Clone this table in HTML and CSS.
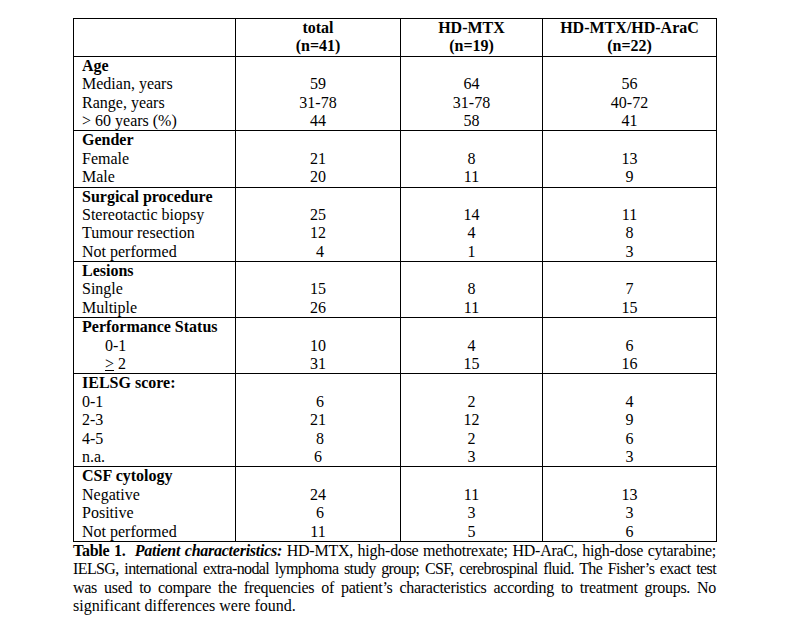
FILE: index.html
```html
<!DOCTYPE html>
<html lang="en">
<head>
<meta charset="utf-8">
<title>Table 1. Patient characteristics</title>
<link rel="stylesheet" href="styles.css">
</head>
<body>
<div class="page">
  <table class="ptable">
    <colgroup>
      <col class="c1"><col class="c2"><col class="c3"><col class="c4">
    </colgroup>
    <thead>
      <tr>
        <th></th>
        <th><div class="ln">total</div><div class="ln">(n=41)</div></th>
        <th><div class="ln">HD-MTX</div><div class="ln">(n=19)</div></th>
        <th><div class="ln">HD-MTX/HD-AraC</div><div class="ln">(n=22)</div></th>
      </tr>
    </thead>
    <tbody>
      <tr>
        <td class="lab"><div class="ln b">Age</div><div class="ln">Median, years</div><div class="ln">Range, years</div><div class="ln">&gt; 60 years (%)</div></td>
        <td><div class="ln"></div><div class="ln">59</div><div class="ln">31-78</div><div class="ln">44</div></td>
        <td><div class="ln"></div><div class="ln">64</div><div class="ln">31-78</div><div class="ln">58</div></td>
        <td><div class="ln"></div><div class="ln">56</div><div class="ln">40-72</div><div class="ln">41</div></td>
      </tr>
      <tr>
        <td class="lab"><div class="ln b">Gender</div><div class="ln">Female</div><div class="ln">Male</div></td>
        <td><div class="ln"></div><div class="ln">21</div><div class="ln">20</div></td>
        <td><div class="ln"></div><div class="ln">8</div><div class="ln">11</div></td>
        <td><div class="ln"></div><div class="ln">13</div><div class="ln">9</div></td>
      </tr>
      <tr>
        <td class="lab"><div class="ln b">Surgical procedure</div><div class="ln">Stereotactic biopsy</div><div class="ln">Tumour resection</div><div class="ln">Not performed</div></td>
        <td><div class="ln"></div><div class="ln">25</div><div class="ln">12</div><div class="ln">&nbsp;4</div></td>
        <td><div class="ln"></div><div class="ln">14</div><div class="ln">4</div><div class="ln">1</div></td>
        <td><div class="ln"></div><div class="ln">11</div><div class="ln">8</div><div class="ln">3</div></td>
      </tr>
      <tr>
        <td class="lab"><div class="ln b">Lesions</div><div class="ln">Single</div><div class="ln">Multiple</div></td>
        <td><div class="ln"></div><div class="ln">15</div><div class="ln">26</div></td>
        <td><div class="ln"></div><div class="ln">8</div><div class="ln">11</div></td>
        <td><div class="ln"></div><div class="ln">7</div><div class="ln">15</div></td>
      </tr>
      <tr>
        <td class="lab"><div class="ln b">Performance Status</div><div class="ln ind">0-1</div><div class="ln ind"><span class="u">&gt;</span> 2</div></td>
        <td><div class="ln"></div><div class="ln">10</div><div class="ln">31</div></td>
        <td><div class="ln"></div><div class="ln">4</div><div class="ln">15</div></td>
        <td><div class="ln"></div><div class="ln">6</div><div class="ln">16</div></td>
      </tr>
      <tr>
        <td class="lab"><div class="ln b">IELSG score:</div><div class="ln">0-1</div><div class="ln">2-3</div><div class="ln">4-5</div><div class="ln">n.a.</div></td>
        <td><div class="ln"></div><div class="ln">&nbsp;6</div><div class="ln">21</div><div class="ln">&nbsp;8</div><div class="ln">6</div></td>
        <td><div class="ln"></div><div class="ln">2</div><div class="ln">12</div><div class="ln">2</div><div class="ln">3</div></td>
        <td><div class="ln"></div><div class="ln">4</div><div class="ln">9</div><div class="ln">6</div><div class="ln">3</div></td>
      </tr>
      <tr>
        <td class="lab"><div class="ln b">CSF cytology</div><div class="ln">Negative</div><div class="ln">Positive</div><div class="ln">Not performed</div></td>
        <td><div class="ln"></div><div class="ln">24</div><div class="ln">&nbsp;6</div><div class="ln">11</div></td>
        <td><div class="ln"></div><div class="ln">11</div><div class="ln">3</div><div class="ln">5</div></td>
        <td><div class="ln"></div><div class="ln">13</div><div class="ln">3</div><div class="ln">6</div></td>
      </tr>
    </tbody>
  </table>
  <div class="caption">
    <div class="cl l1"><b>Table 1.</b>&nbsp; <b><i>Patient characteristics:</i></b> HD-MTX, high-dose methotrexate; HD-AraC, high-dose cytarabine;</div>
    <div class="cl l2">IELSG, international extra-nodal lymphoma study group; CSF, cerebrospinal fluid. The Fisher’s exact test</div>
    <div class="cl l3">was used to compare the frequencies of patient’s characteristics according to treatment groups. No</div>
    <div class="cl last">significant differences were found.</div>
  </div>
</div>
</body>
</html>
```

FILE: styles.css
```css
html, body {
  margin: 0;
  padding: 0;
  background: #ffffff;
}

body {
  font-family: "Liberation Serif", "Times New Roman", serif;
  font-size: 16px;
  color: #000;
}

.page {
  padding: 18px 0 0 73px;
  width: 643px;
}

.ptable {
  border-collapse: collapse;
  table-layout: fixed;
  width: 643px;
}

.c1 { width: 162px; }
.c2 { width: 165px; }
.c3 { width: 142px; }
.c4 { width: 174px; }

.ptable th,
.ptable td {
  border: 1px solid #000;
  padding: 0;
  vertical-align: top;
  text-align: center;
}

.ptable th {
  font-weight: bold;
}

.ptable td.lab {
  text-align: left;
  padding-left: 8px;
}

.ln {
  height: 18.4px;
  line-height: 18.4px;
  white-space: nowrap;
}

.b { font-weight: bold; }

.ind { padding-left: 23px; }

.u { text-decoration: underline; }

.caption {
  width: 643px;
}

.cl {
  line-height: 18.4px;
  text-align: justify;
  text-align-last: justify;
}

.cl.l1 {
  letter-spacing: -0.25px;
}

.cl.l2 {
  letter-spacing: -0.6px;
  word-spacing: -0.5px;
}

.cl.l3 {
  letter-spacing: -0.3px;
}

.cl.last {
  text-align: left;
  text-align-last: left;
}
```
